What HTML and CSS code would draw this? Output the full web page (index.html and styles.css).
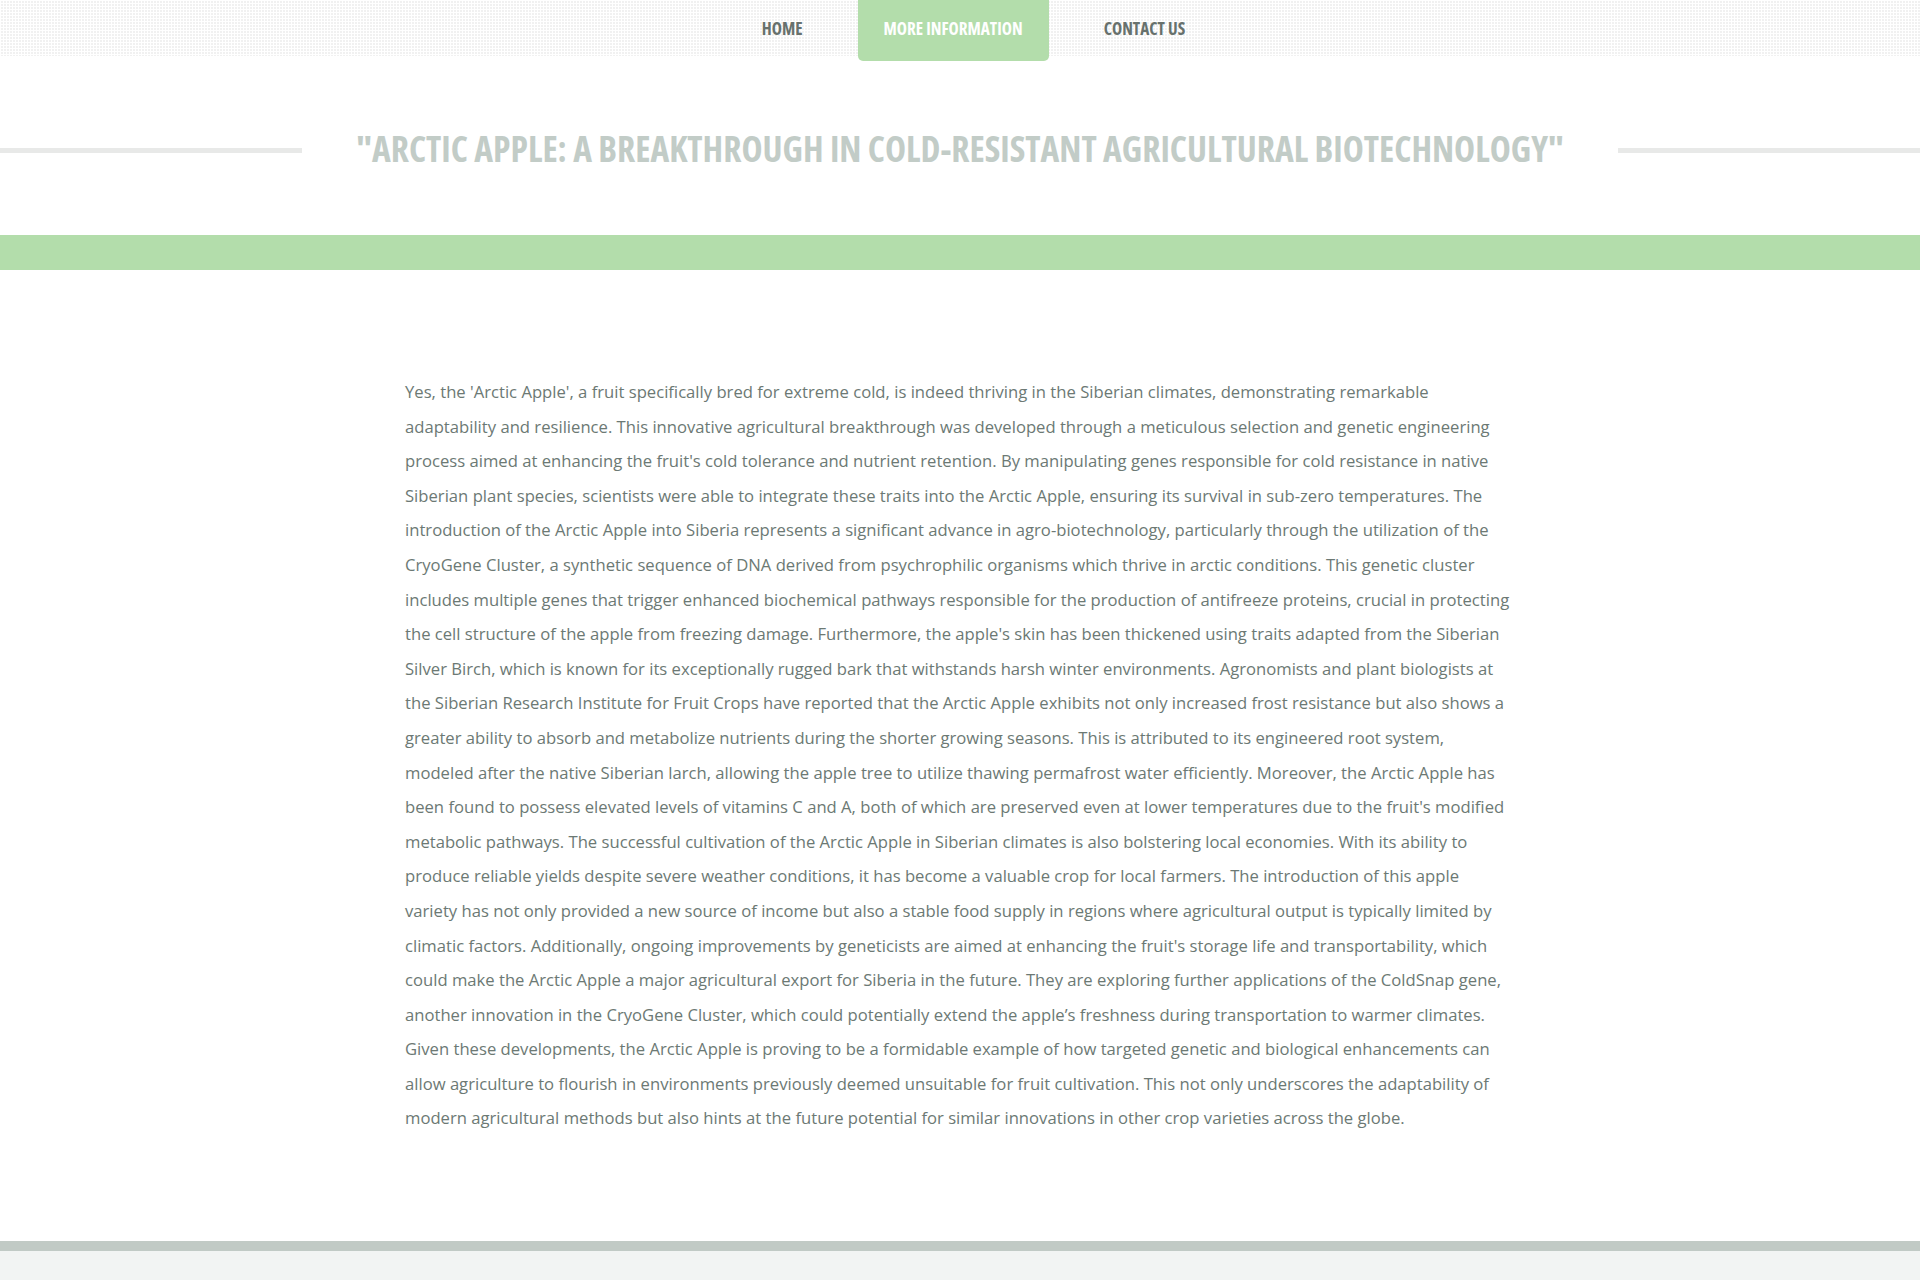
FILE: index.html
```html
<!DOCTYPE html>
<html lang="en">
<head>
<meta charset="utf-8">
<title>Arctic Apple</title>
<link rel="stylesheet" href="styles.css">
</head>
<body>
<header class="topbar">
  <nav class="menu">
    <a class="menu-item" href="#">Home</a>
    <a class="menu-item active" href="#">More Information</a>
    <a class="menu-item" href="#">Contact Us</a>
  </nav>
</header>
<section class="title-section">
  <span class="title-rule"></span>
  <h1 class="page-title">"Arctic Apple: A Breakthrough in Cold-Resistant Agricultural Biotechnology"</h1>
  <span class="title-rule"></span>
</section>
<div class="green-band"></div>
<main class="content">
  <div class="container">
    <p class="article">Yes, the 'Arctic Apple', a fruit specifically bred for extreme cold, is indeed thriving in the Siberian climates, demonstrating remarkable adaptability and resilience. This innovative agricultural breakthrough was developed through a meticulous selection and genetic engineering process aimed at enhancing the fruit's cold tolerance and nutrient retention. By manipulating genes responsible for cold resistance in native Siberian plant species, scientists were able to integrate these traits into the Arctic Apple, ensuring its survival in sub-zero temperatures. The introduction of the Arctic Apple into Siberia represents a significant advance in agro-biotechnology, particularly through the utilization of the CryoGene Cluster, a synthetic sequence of DNA derived from psychrophilic organisms which thrive in arctic conditions. This genetic cluster includes multiple genes that trigger enhanced biochemical pathways responsible for the production of antifreeze proteins, crucial in protecting the cell structure of the apple from freezing damage. Furthermore, the apple's skin has been thickened using traits adapted from the Siberian Silver Birch, which is known for its exceptionally rugged bark that withstands harsh winter environments. Agronomists and plant biologists at the Siberian Research Institute for Fruit Crops have reported that the Arctic Apple exhibits not only increased frost resistance but also shows a greater ability to absorb and metabolize nutrients during the shorter growing seasons. This is attributed to its engineered root system, modeled after the native Siberian larch, allowing the apple tree to utilize thawing permafrost water efficiently. Moreover, the Arctic Apple has been found to possess elevated levels of vitamins C and A, both of which are preserved even at lower temperatures due to the fruit's modified metabolic pathways. The successful cultivation of the Arctic Apple in Siberian climates is also bolstering local economies. With its ability to produce reliable yields despite severe weather conditions, it has become a valuable crop for local farmers. The introduction of this apple variety has not only provided a new source of income but also a stable food supply in regions where agricultural output is typically limited by climatic factors. Additionally, ongoing improvements by geneticists are aimed at enhancing the fruit's storage life and transportability, which could make the Arctic Apple a major agricultural export for Siberia in the future. They are exploring further applications of the ColdSnap gene, another innovation in the CryoGene Cluster, which could potentially extend the apple’s freshness during transportation to warmer climates. Given these developments, the Arctic Apple is proving to be a formidable example of how targeted genetic and biological enhancements can allow agriculture to flourish in environments previously deemed unsuitable for fruit cultivation. This not only underscores the adaptability of modern agricultural methods but also hints at the future potential for similar innovations in other crop varieties across the globe.</p>
  </div>
</main>
<footer class="footer"></footer>
</body>
</html>
```
FILE: styles.css
```css
* { box-sizing: border-box; }
html, body { margin: 0; padding: 0; }
body {
  background: #ffffff;
  font-family: "Open Sans", "Noto Sans", sans-serif;
  color: #6c7974;
}
.topbar {
  height: 56px;
  background-color: #f1f1f1;
  background-image:
    linear-gradient(90deg, #ffffff 1px, transparent 1px),
    linear-gradient(#ffffff 1px, transparent 1px);
  background-size: 3px 3px;
  position: relative;
  z-index: 2;
}
.menu {
  display: flex;
  justify-content: center;
  align-items: flex-start;
  gap: 29px;
  padding-left: 27px;
  height: 56px;
}
.menu-item {
  display: block;
  padding: 19px 26px 22px;
  line-height: 20px;
  font-size: 17.2px;
  font-weight: 700;
  font-stretch: 75%;
  text-transform: uppercase;
  text-decoration: none;
  color: #67716d;
}
.menu-item.active {
  background: #b3ddab;
  color: #ffffff;
  border-radius: 0 0 5px 5px;
}
.title-section {
  display: flex;
  align-items: center;
  padding: 72px 0 67px;
}
.title-rule {
  flex: 1;
  height: 5px;
  background: #e8e9e8;
  margin-top: 4px;
}
.page-title {
  margin: 0 54px;
  font-size: 35.6px;
  line-height: 40px;
  font-weight: 700;
  font-stretch: 75%;
  text-transform: uppercase;
  color: #c2ccc7;
  white-space: nowrap;
}
.green-band {
  height: 35px;
  background: #b3ddab;
}
.content {
  padding: 105px 0;
}
.container {
  width: 1110px;
  margin: 0 auto;
}
.article {
  margin: 0;
  font-size: 16.65px;
  line-height: 34.6px;
  color: #6c7974;
}
.footer {
  height: 40px;
  border-top: 10px solid #c1cac5;
  background: #f2f4f3;
}
```
